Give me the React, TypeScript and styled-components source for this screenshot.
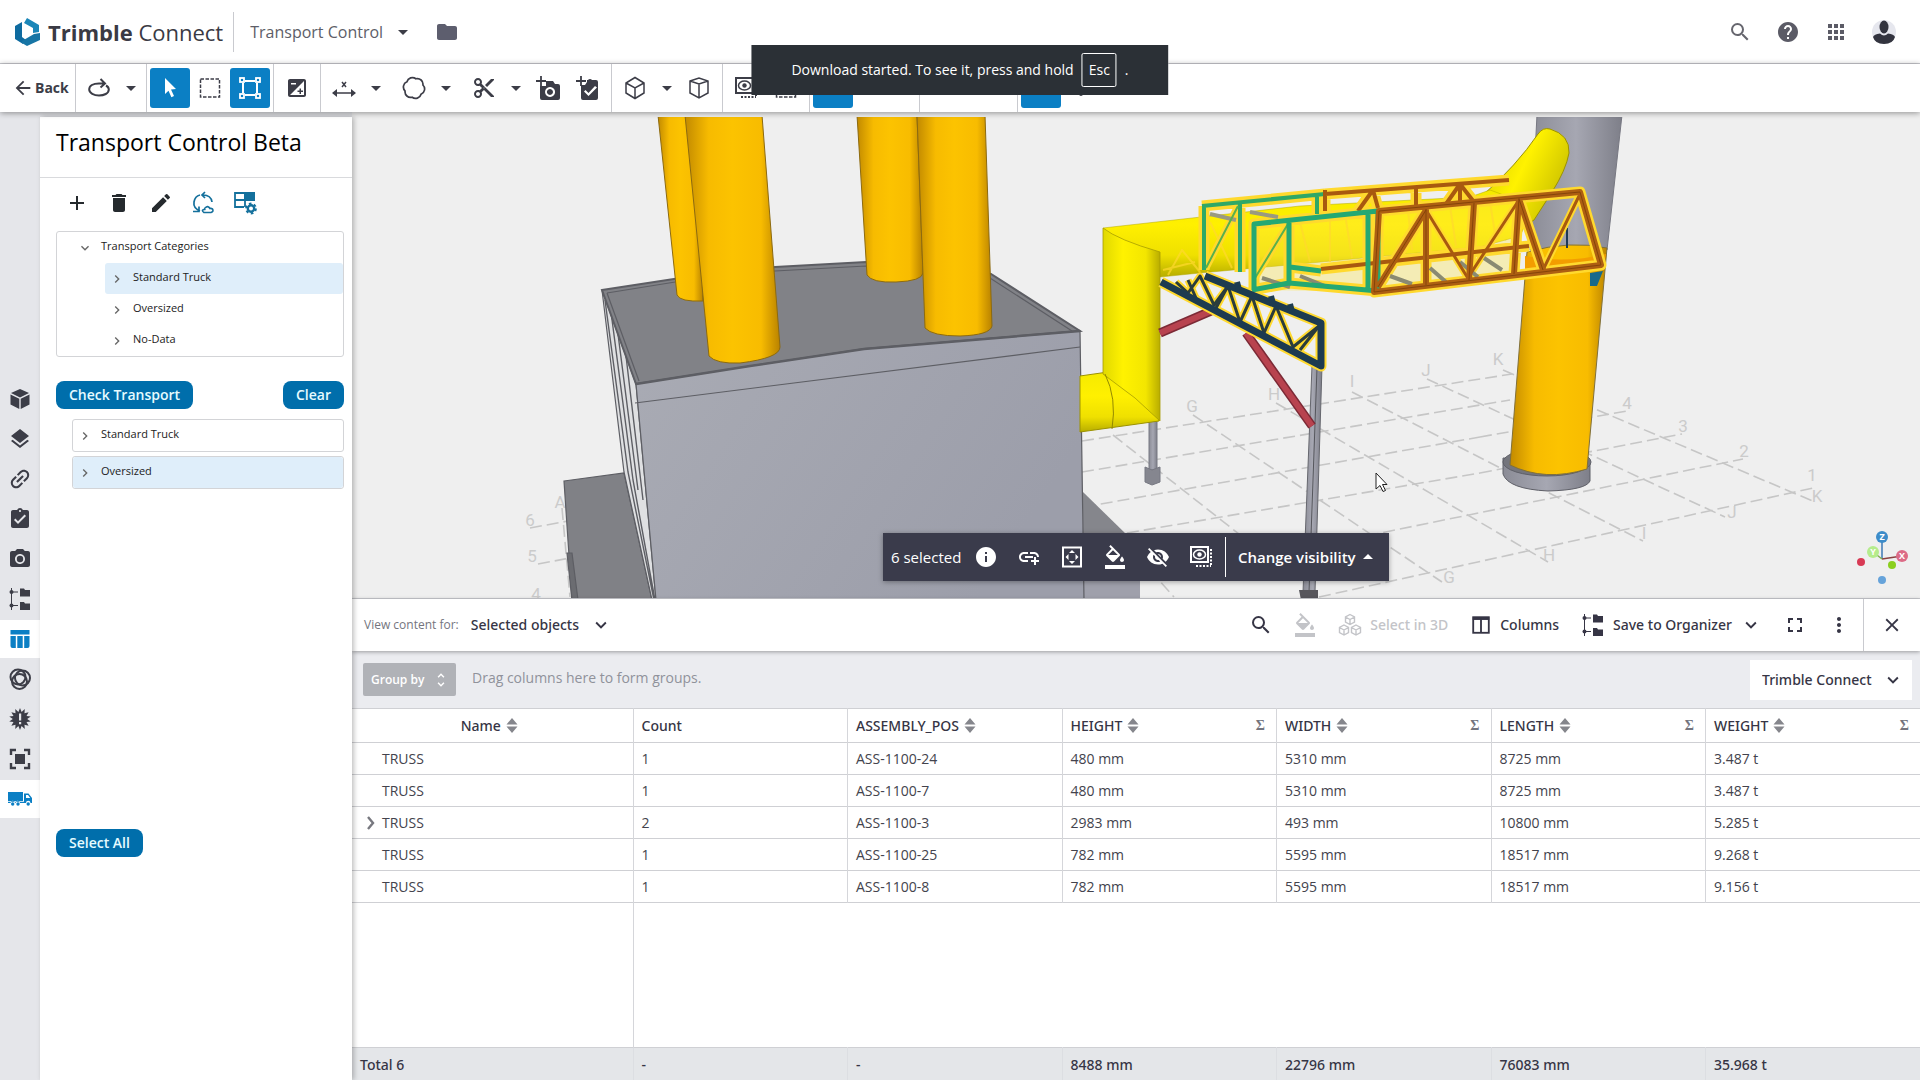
import React from "react";
import styled, { createGlobalStyle, css } from "styled-components";
import {
  MdAdd, MdAddLink, MdApps, MdArrowBack, MdArrowDropDown, MdArrowDropUp, MdAssignmentTurnedIn,
  MdCameraAlt, MdClose, MdContentCut, MdDelete, MdEdit, MdExposure, MdFolder,
  MdFormatColorFill, MdFullscreen, MdHelp, MdInfo, MdKeyboardArrowDown, MdKeyboardArrowRight, MdLayers,
  MdLink, MdMoreVert, MdSearch, MdUnfoldMore, MdVisibilityOff,
} from "react-icons/md";

const color = {
  ink: "#3c3d47",
  text: "#363545",
  line: "#c9cacf",
  soft: "#e5e6ea",
  blue: "#0b7fc4",
  deepBlue: "#006eab",
  pick: "#dfeefa",
  bar: "#3a3b4b",
};

const medium = css`
  font-family: "Noto Sans", "Open Sans", sans-serif;
  font-weight: 500;
`;

const Global = createGlobalStyle`
  *, *::before, *::after { box-sizing: border-box; }
  body { margin: 0; background: #fff; color: ${color.text}; font: 14px/20px "Open Sans", "Noto Sans", sans-serif; }
  button, select { font: inherit; color: inherit; }
  svg { display: block; flex: none; }
`;

const Page = styled.div`
  display: flex;
  flex-direction: column;
  height: 100vh;
  min-height: 720px;
  overflow: hidden;
`;

const plain = css`
  border: 0;
  background: none;
  padding: 0;
  cursor: pointer;
`;

/* ---------- header ---------- */

const Header = styled.header`
  display: flex;
  align-items: center;
  height: 64px;
  flex: none;
  padding: 0 20px 0 14px;
  border-bottom: 1px solid ${color.line};
`;

const Brand = styled.a`
  display: flex;
  align-items: center;
  gap: 6px;
  padding-right: 10px;
  color: #3a3a44;
  font-size: 22px;
  line-height: 40px;
  text-decoration: none;
  border-right: 1px solid ${color.line};
  b { font-weight: 700; }
`;

const ProjectButton = styled.button`
  ${plain}
  display: flex;
  align-items: center;
  gap: 8px;
  padding: 0 16px;
  font-size: 16px;
  color: #5d5e68;
  svg { color: ${color.ink}; }
`;

const HeaderActions = styled.nav`
  display: flex;
  gap: 16px;
  margin-left: auto;
`;

const IconButton = styled.button<{ $size?: number }>`
  ${plain}
  display: inline-flex;
  align-items: center;
  justify-content: center;
  width: ${(p) => p.$size ?? 32}px;
  height: ${(p) => p.$size ?? 32}px;
`;

/* ---------- toolbar ---------- */

const Toolbar = styled.div`
  display: flex;
  flex: none;
  height: 48px;
  position: relative;
  z-index: 3;
  background: #fff;
  color: ${color.ink};
  box-shadow: 0 1px 6px rgba(0, 0, 0, 0.4);
`;

const ToolGroup = styled.div<{ $width?: number; $open?: boolean }>`
  display: flex;
  align-items: center;
  padding: 0 3px;
  min-width: ${(p) => p.$width ?? 0}px;
  border-right: ${(p) => (p.$open ? 0 : 1)}px solid ${color.line};
`;

const BackButton = styled.button`
  ${plain}
  display: flex;
  align-items: center;
  width: 76px;
  gap: 1px;
  padding-left: 12px;
  font-weight: 700;
  border-right: 1px solid ${color.line};
`;

const Tool = styled.button<{ $on?: boolean }>`
  ${plain}
  display: flex;
  align-items: center;
  justify-content: center;
  width: 40px;
  height: 40px;
  border-radius: 3px;
  color: ${(p) => (p.$on ? "#fff" : "inherit")};
  background: ${(p) => (p.$on ? color.blue : "none")};
`;

const Caret = styled.button<{ $gap?: boolean }>`
  ${plain}
  width: 24px;
  height: 40px;
  display: flex;
  align-items: center;
  justify-content: center;
  margin-right: ${(p) => (p.$gap ? 6 : 0)}px;
`;

const Toast = styled.div`
  position: fixed;
  top: 45px;
  left: 50%;
  transform: translateX(-50%);
  z-index: 10;
  display: flex;
  align-items: center;
  gap: 8px;
  height: 50px;
  padding: 0 40px;
  background: #2b3036;
  color: #fff;
  white-space: nowrap;
  kbd {
    font: inherit;
    padding: 6px;
    border: 1px solid #fff;
    border-radius: 2px;
  }
`;

/* ---------- body ---------- */

const Body = styled.div`
  display: flex;
  flex: 1;
  min-height: 0;
  background: ${color.soft};
`;

const Rail = styled.nav`
  display: flex;
  flex-direction: column;
  justify-content: center;
  gap: 2px;
  width: 40px;
  padding-top: 6px;
  color: ${color.ink};
`;

const RailButton = styled.button<{ $on?: boolean }>`
  ${plain}
  display: flex;
  align-items: center;
  justify-content: center;
  height: 38px;
  color: ${(p) => (p.$on ? color.blue : "inherit")};
  background: ${(p) => (p.$on ? "#fff" : "none")};
`;

const Panel = styled.aside`
  display: flex;
  flex-direction: column;
  width: 312px;
  flex: none;
  margin-top: 5px;
  background: #fff;
  box-shadow: 2px 0 5px rgba(0, 0, 0, 0.25);
  z-index: 2;
`;

const PanelTitle = styled.h1`
  margin: 0;
  padding: 9px 16px 19px;
  font-size: 23px;
  line-height: 32px;
  font-weight: 500;
  color: #000;
  border-bottom: 1px solid #d9dadd;
`;

const PanelTools = styled.div`
  display: flex;
  gap: 10px;
  padding: 9px 21px 12px;
  color: #252a2e;
  button:nth-child(n + 4) { color: #14709c; }
`;

const Tree = styled.ul`
  list-style: none;
  margin: 0 8px 0 16px;
  padding: 0;
  border: 1px solid #d3d4d7;
  border-radius: 3px;
  ul { list-style: none; margin: 0; padding: 0 0 0 48px; }
`;

const TreeRow = styled.button<{ $on?: boolean; $root?: boolean }>`
  ${plain}
  display: flex;
  align-items: center;
  gap: 8px;
  width: 100%;
  height: 31px;
  padding: 0 4px 3px ${(p) => (p.$root ? 20 : 4)}px;
  font-size: 11px;
  line-height: 16px;
  color: #222;
  background: ${(p) => (p.$on ? color.pick : "none")};
  border-radius: 3px;
  svg { margin-top: 4px; color: #666; }
`;

const ButtonRow = styled.div`
  display: flex;
  justify-content: space-between;
  padding: 24px 8px 10px 16px;
`;

const Pill = styled.button`
  ${plain}
  height: 28px;
  padding: 0 13px;
  border-radius: 8px;
  background: ${color.deepBlue};
  color: #e6fbff;
  font-weight: 600;
`;

const Results = styled.ul`
  list-style: none;
  display: flex;
  flex-direction: column;
  gap: 4px;
  margin: 0 8px 0 32px;
  padding: 0;
  flex: 0 0 410px;
  li { border: 1px solid #d3d4d7; border-radius: 3px; }
`;

const PanelFoot = styled.div`
  padding: 0 16px;
`;

const Main = styled.main`
  flex: 1;
  min-width: 0;
  display: grid;
  grid-template-rows: minmax(0, 487fr) minmax(0, 481fr);
`;

const Viewer = styled.section`
  position: relative;
  min-height: 0;
  padding-top: 5px;
  background: #efefef;
  border-bottom: 1px solid ${color.line};
`;

const ActionBar = styled.div`
  position: absolute;
  left: 50%;
  bottom: 17px;
  margin-left: -253px;
  width: 506px;
  height: 48px;
  display: flex;
  align-items: center;
  padding-left: 8px;
  background: ${color.bar};
  color: #fff;
  font-size: 15px;
  box-shadow: 0 1px 5px rgba(0, 0, 0, 0.35);
`;

const Count = styled.span`
  width: 73px;
`;

const ActionButtons = styled.div`
  display: flex;
  align-items: center;
  height: 40px;
  padding-right: 3px;
  border-right: 1px solid #fff;
  button { width: 43px; }
`;

const VisibilityButton = styled.button`
  ${plain}
  display: flex;
  align-items: center;
  padding-left: 12px;
  font-weight: 600;
`;

/* ---------- data table ---------- */

const DataPanel = styled.section`
  display: flex;
  flex-direction: column;
  min-height: 0;
  background: #fff;
`;

const DataBar = styled.div`
  display: flex;
  align-items: center;
  height: 52px;
  flex: none;
  padding-left: 12px;
  position: relative;
  z-index: 1;
  background: #fff;
  box-shadow: 0 1px 4px rgba(0, 0, 0, 0.35);
`;

const FieldLabel = styled.label`
  font-size: 12px;
  color: #74757e;
`;

const SelectWrap = styled.span<{ $boxed?: boolean }>`
  display: inline-flex;
  align-items: center;
  height: 40px;
  margin-left: ${(p) => (p.$boxed ? "auto" : "12px")};
  padding: ${(p) => (p.$boxed ? "0 8px 0 12px" : "0")};
  background: #fff;
  svg { margin-left: -24px; pointer-events: none; }
  select {
    ${medium}
    appearance: none;
    border: 0;
    background: none;
    padding: 0 34px 0 0;
    outline: 0;
  }
`;

const DataActions = styled.div`
  display: flex;
  align-items: center;
  margin-left: auto;
  height: 100%;
`;

const DataAction = styled.button<{ $faded?: boolean; $labelled?: boolean }>`
  ${plain}
  ${medium}
  display: flex;
  align-items: center;
  gap: 8px;
  height: 40px;
  padding: 0 ${(p) => (p.$labelled ? 11 : 10)}px;
  color: ${(p) => (p.$faded ? "#c3c4c8" : color.text)};
`;

const CloseCell = styled.div`
  display: flex;
  align-items: center;
  justify-content: center;
  width: 57px;
  height: 100%;
  margin-left: 2px;
  border-left: 1px solid ${color.line};
`;

const GroupBar = styled.div`
  display: flex;
  align-items: center;
  height: 57px;
  flex: none;
  padding: 0 8px 0 11px;
  background: #ebecf0;
`;

const GroupButton = styled.button`
  ${plain}
  display: flex;
  align-items: center;
  justify-content: space-between;
  width: 93px;
  height: 33px;
  padding: 0 6px 0 8px;
  border-radius: 2px;
  background: #b0b2b7;
  color: #fff;
  font-size: 12px;
  font-weight: 600;
`;

const GroupHint = styled.span`
  padding: 0 0 4px 16px;
  color: #90929b;
`;

const TableArea = styled.div`
  flex: 1;
  min-height: 0;
`;

const Table = styled.table`
  width: 100%;
  height: 100%;
  table-layout: fixed;
  border-collapse: collapse;
  th, td {
    height: 32px;
    padding: 0 8px;
    text-align: left;
    font-weight: 400;
    border-top: 1px solid #cfd0d4;
    border-right: 1px solid #d5d6da;
  }
  th:last-child, td:last-child { border-right: 0; }
  thead th { ${medium} height: 34px; }
  tbody td { color: #43434d; }
  tfoot td { ${medium} height: 33px; padding-top: 2px; background: #e4e6e9; border-right-color: #dcdee2; }
`;

const FillerRow = styled.tr`
  td { height: auto; }
  && td + td { border-right: 0; }
`;

const HeadCell = styled.div<{ $center?: boolean }>`
  display: flex;
  align-items: center;
  gap: 5px;
  justify-content: ${(p) => (p.$center ? "center" : "flex-start")};
  padding-right: ${(p) => (p.$center ? 6 : 3)}px;
  svg { color: #85868c; }
`;

const Sigma = styled.span`
  margin-left: auto;
  color: #74757e;
  font: 700 14px/20px "Liberation Serif", serif;
`;

const NameCell = styled.div`
  display: flex;
  align-items: center;
  svg { color: #77787f; }
`;

const ExpandSlot = styled.span`
  width: 22px;
  padding-left: 6px;
`;

/* ---------- icons ---------- */

type IconProps = { size?: number; children?: React.ReactNode };
const Line = ({ size = 24, children }: IconProps) => (
  <svg width={size} height={size} viewBox="0 0 24 24" fill="none" stroke="currentColor" strokeWidth="2">{children}</svg>
);
const Solid = ({ size = 24, children }: IconProps) => (
  <svg width={size} height={size} viewBox="0 0 24 24" fill="currentColor">{children}</svg>
);

const Logo = () => (
  <svg width="28" height="30" viewBox="0 0 28 30">
    <path d="M13 1 25 8v7l-6 1V11l-9-5z" fill="#1b86b8" />
    <path d="M8 5v15l4 3-3 4L1 22V9z" fill="#0e6ba0" />
    <path d="M8 24l12-7 6-1v7l-13 6-5-3z" fill="#1775a5" />
  </svg>
);
const Avatar = () => (
  <svg width="26" height="26" viewBox="0 0 26 26">
    <circle cx="13" cy="13" r="12" fill="#e6e7ee" />
    <ellipse cx="13" cy="8" rx="4.500" ry="6.500" fill="#33343f" />
    <path d="M2 18q1-3 7-3.500 4 4 8 0 6 .5 7 3.500-2 7-11 7T2 18z" fill="#33343f" />
  </svg>
);
const OrbitIcon = () => (
  <Line><path d="M17 7.500H12C6 7.500 2.200 10 2.200 13.500S7 19.500 12 19.500 21.800 17.500 21.800 13.500Q21.800 11 19 9.500M13.500 3l4.500 4.500-4.500 4" /></Line>
);
const PointerIcon = () => <Solid><path d="M7 2l11 11-5 .6 3 6.400-2.600 1.200-2.900-6.500L7 18z" /></Solid>;
const MarqueeIcon = () => <Line><rect x="2.500" y="3" width="19" height="18" strokeWidth="1.500" strokeDasharray="3.500 1.500" /></Line>;
const BoxIcon = () => (
  <Line>
    <path d="M5 7v10M19 7v10M7 5h10M7 19h10" />
    {[[2, 2], [18, 2], [2, 18], [18, 18]].map(([x, y]) => <rect key={x + "-" + y} x={x} y={y} width="4" height="4" strokeWidth="1.800" />)}
  </Line>
);
const MeasureIcon = () => (
  <Line><path d="M1 17h22M10 6l4 5M14 6l-4 5" strokeWidth="1.500" /><path d="M0 17l5-4v8zM24 17l-5-4v8z" fill="currentColor" stroke="none" /></Line>
);
const lobes = Array.from({ length: 7 }, (_, i) => {
  const a = (i * Math.PI) / 3 + 0.2;
  const point = `${(12 + 9.4 * Math.sin(a)).toFixed(2)} ${(12 - 9.4 * Math.cos(a)).toFixed(2)}`;
  return i ? `A5.600 5.600 0 0 1 ${point}` : `M${point}`;
}).join("");
const CloudIcon = () => <Line><path d={lobes + "Z"} strokeWidth="1.700" /></Line>;
const CubeLine = ({ corner = false }: { corner?: boolean }) => (
  <Line><path d={corner ? "M3 5l9-3 9 3v12l-9 5-9-5zM3 5l9 3 9-3M12 8v14" : "M12 1.500l9 5.500v10l-9 5.500L3 17V7zM3 7l9 5 9-5M12 12v10"} strokeWidth="1.500" /></Line>
);
const PlusMark = () => <path d="M0 5h10M5 0v10" stroke="currentColor" strokeWidth="1.800" fill="none" />;
const CameraPlus = () => (
  <Solid><PlusMark /><path fillRule="evenodd" d="M10 7V5h7l2 3h3q2 0 2 2v12q0 2-2 2H6q-2 0-2-2V10h6zm4 4a5 5 0 1 0 .1 0zm0 2a3 3 0 1 1-.1 0z" /></Solid>
);
const TodoPlus = () => (
  <Solid><PlusMark /><path fillRule="evenodd" d="M11 6V4h1a2.500 2.500 0 0 1 4 0h4q2 0 2 2v16q0 2-2 2H7q-2 0-2-2V9h4zm8 4l-6.500 7-3-3L8 15.500l4.500 4.500L21 11.500z" /></Solid>
);
const EyeBox = () => (
  <Line><rect x="2" y="2" width="17" height="15" /><ellipse cx="10.500" cy="9.500" rx="6" ry="4.500" strokeWidth="1.500" /><circle cx="10.500" cy="9.500" r="2.200" fill="currentColor" stroke="none" /><path d="M22 4v17M7 21h15" strokeDasharray="2 1.500" /></Line>
);
const CubeSolid = () => (
  <Solid><path d="M12 2l9 4-9 4.500L3 6z" /><path d="M2.500 7.500l8.800 4.300V22l-8.800-4.500zM21.500 7.500l-8.800 4.300V22l8.800-4.500z" /></Solid>
);
const OrganizerIcon = () => (
  <Solid>
    <path d="M3 1h1v22H3zM4 4.500h6v1H4zM4 18h6v1H4z" />
    <circle cx="3.500" cy="5" r="2" /><circle cx="3.500" cy="18.500" r="2" />
    <path d="M12 1.500h4l1 1.500h5v6.500H12zM12 15h4l1 1.500h5V23H12z" />
  </Solid>
);
const TableIcon = () => <Solid><path d="M2.500 3h19v4.500h-19zM2.500 9h5.300v12H4.500q-2 0-2-2zM9.300 9h5.400v12H9.300zM16.200 9h5.300v10q0 2-2 2h-3.300z" /></Solid>;
const KnotIcon = () => (
  <Line>
    <circle cx="10" cy="10" r="7.500" strokeWidth="2" /><circle cx="14.500" cy="11" r="7.500" strokeWidth="2" /><circle cx="11.500" cy="14.500" r="7.500" strokeWidth="2" />
  </Line>
);
const burst = Array.from({ length: 28 }, (_, i) => {
  const a = (i * Math.PI) / 14;
  const r = i % 2 ? 7.2 : 11;
  return `${12 + r * Math.sin(a)},${12 - r * Math.cos(a)}`;
}).join(" ");
const ClashIcon = () => <Solid><polygon points={burst} /><path d="M11 6.500h2.200v7H11zM11 15h2.200v2.300H11z" fill="#e5e6ea" /></Solid>;
const FocusIcon = () => (
  <Solid><rect x="7" y="7" width="10" height="10" /><path d="M3 8V3h5M16 3h5v5M21 16v5h-5M8 21H3v-5" fill="none" stroke="currentColor" strokeWidth="2.400" /></Solid>
);
const TruckIcon = () => (
  <Solid><path d="M0 5h15v9H0zM16 6.500h4.500L24 11v5h-1.500a2.200 2.200 0 0 0-4.500 0h-6a2.200 2.200 0 0 0-4.400 0H7a2.200 2.200 0 0 0-4.500 0H0v-1.300h16zM18 8v3h4.200L20 8z" fillRule="evenodd" /><circle cx="4.700" cy="17" r="1.700" /><circle cx="10" cy="17" r="1.700" /><circle cx="20.200" cy="17" r="1.700" /></Solid>
);
const SyncIcon = () => (
  <Line><path d="M9 20Q2 17 3 11t6-7M2 20.500h6v-5M14 1l-3 3 3 3M12 4q8 0 9 7" strokeWidth="1.700" /><path d="M13 21.500h7q3-1 1.500-3.500-1.500-1-2.500-.5-2-3.500-5-.5-1 1-.5 1.500-4 .5-.5 3z" strokeWidth="1.600" /></Line>
);
const TableGear = () => (
  <Line><path d="M11 16H2V2h19v8M2 9h19M12 2v14" strokeWidth="1.800" /><path d="M12 2h9v7h-9z" fill="currentColor" /><circle cx="18" cy="17.500" r="3.200" strokeWidth="2.400" /><circle cx="18" cy="17.500" r="4.900" strokeWidth="2" strokeDasharray="2.600 2.500" /></Line>
);
const FitIcon = () => (
  <Solid><rect x="3" y="2.500" width="18" height="19" fill="none" stroke="currentColor" strokeWidth="2" /><path d="M12 5l3 3H9zM12 19l3-3H9zM5.500 12l3-3v6zM18.500 12l-3-3v6z" /></Solid>
);
const CubesIcon = () => (
  <Line><path d="M12 1.500l4.500 2.500v5L12 11.500 7.500 9V4zM7.500 4L12 6.500 16.500 4M12 6.500v5M6 12l4.500 2.500v5L6 22l-4.500-2.500v-5zM1.500 14.500L6 17l4.500-2.500M6 17v5M18 12l4.500 2.500v5L18 22l-4.500-2.500v-5zM13.500 14.500L18 17l4.500-2.500M18 17v5" strokeWidth="1.400" /></Line>
);
const ColumnsIcon = () => <Line size={22}><rect x="3.500" y="3.500" width="17" height="17" /><path d="M3 5h18" strokeWidth="3" /><path d="M12 4v16" /></Line>;
const SortIcon = () => <svg width="12" height="15" viewBox="0 0 12 15" fill="currentColor"><path d="M6 0l5.500 6.500H.5zM6 15l5.500-6.500H.5z" /></svg>;
const ExpandIcon = () => <svg width="10" height="16" viewBox="0 0 10 16" fill="none" stroke="currentColor" strokeWidth="2.400"><path d="M2 2l5 6-5 6" /></svg>;

/* ---------- 3D scene ---------- */

const gridLines = [
  [1319, 597, 1813, 488], [1150, 580, 1743, 459], [1127, 533, 1480, 473], [1480, 473, 1682, 434], [1084, 507, 1480, 437], [1480, 437, 1627, 411],
  [1082, 472, 1510, 400], [1082, 441, 1512, 374],
  [1503, 370, 1815, 502], [1427, 379, 1725, 517], [1352, 392, 1643, 541], [1276, 403, 1548, 562],
  [1193, 415, 1442, 582], [1113, 435, 1300, 582], [1150, 570, 1174, 597],
  [530, 528, 568, 521], [538, 564, 570, 558], [562, 508, 570, 597],
];
const gridLabels: [string, number, number][] = [
  ["G", 1192, 412], ["H", 1274, 400], ["I", 1352, 387], ["J", 1426, 376], ["K", 1498, 365], ["4", 1627, 409],
  ["3", 1683, 432], ["2", 1744, 457], ["1", 1812, 481], ["K", 1817, 502], ["J", 1732, 518], ["I", 1644, 539],
  ["H", 1549, 561], ["G", 1449, 583], ["A", 560, 508], ["6", 530, 526], ["5", 532, 562], ["4", 536, 600],
];

const backGreen = "M1202 206L1325 194M1204 206V222M1240 203V272M1204 222V270M1317 196V214";
const backBrown = "M1325 194L1509 180M1325 190V211M1373 190L1378 208M1373 190L1358 211M1416 187V206M1460 182V204M1460 184L1446 204M1460 184L1474 202M1321 269L1529 246";
const frontGreen = "M1254 290V224L1378 211V291L1289 283L1252 290M1289 221V283M1368 212V288M1290 267L1321 271";
const frontBrown = "M1379 211L1580 192L1601 265L1374 292ZM1426 209V285M1474 203L1469 280M1519 198L1514 274M1378 287L1426 210M1519 199L1543 270";
const thinBrown = "M1426 210L1469 280M1469 276L1519 200M1543 270L1579 196";
const thinGreen = "M1255 278L1288 224M1206 268L1238 206";
const navyChords = "M1205 276L1321 323V366L1161 282";
const navyWeb = "M1176 282L1188 293L1200 276L1214 305L1228 286L1240 322L1252 296L1264 333L1276 306L1293 347L1319 326L1300 350M1188 280L1196 298M1228 286L1216 308";

const Scene = () => (
  <svg width="100%" height="100%" viewBox="352 117 1568 481" preserveAspectRatio="xMidYMin slice" role="img" aria-label="3D model of the plant">
    <defs>
      <linearGradient id="amber"><stop offset="0" stopColor="#c28a00" /><stop offset=".25" stopColor="#f7bb00" /><stop offset=".5" stopColor="#fcc300" /><stop offset=".8" stopColor="#f8bc00" /><stop offset="1" stopColor="#b98200" /></linearGradient>
      <linearGradient id="pipeV"><stop offset="0" stopColor="#e0d800" /><stop offset=".35" stopColor="#fff200" /><stop offset=".75" stopColor="#f3e600" /><stop offset="1" stopColor="#b9ad00" /></linearGradient>
      <linearGradient id="pipeH" x2="0" y2="1"><stop offset="0" stopColor="#f5ea00" /><stop offset=".4" stopColor="#fff000" /><stop offset=".75" stopColor="#efe000" /><stop offset="1" stopColor="#b7ad00" /></linearGradient>
      <linearGradient id="pipeD" x2="1" y2=".6"><stop offset="0" stopColor="#cfc500" /><stop offset=".5" stopColor="#fff200" /><stop offset="1" stopColor="#c4ba00" /></linearGradient>
      <linearGradient id="steel"><stop offset="0" stopColor="#8b8c96" /><stop offset=".5" stopColor="#a6a7b2" /><stop offset="1" stopColor="#7e7f89" /></linearGradient>
      <linearGradient id="wall" x2="1" y2=".4"><stop offset="0" stopColor="#a9abb4" /><stop offset="1" stopColor="#9c9eaa" /></linearGradient>
    </defs>
    <g stroke="#c6c6c6" strokeWidth="1.600" strokeDasharray="12 5">
      {gridLines.map(([a, b, c, d], i) => <line key={i} x1={a} y1={b} x2={c} y2={d} />)}
    </g>
    <g fill="#cbcbcb" fontFamily="Roboto, sans-serif" fontSize="17" textAnchor="middle">
      {gridLabels.map(([t, x, y], i) => <text key={i} x={x} y={y}>{t}</text>)}
    </g>

    <g stroke="#5d5e64" strokeWidth="1.200">
      <path d="M564 481L624 473L652 600H572Z" fill="#808186" />
      <path d="M567 553h5l6 47h-6z" fill="#6b6c71" />
      <path d="M1083 492L1127 535L1140 552V600H1083Z" fill="#85868c" stroke="none" />
      <path d="M1083 575L1140 572V600H1083Z" fill="#9fa0ab" stroke="none" />
      <path d="M602 290L636 384L656 600H652L624 472Z" fill="#dfe0e2" />
      <path d="M605 300L628 472L654 600M611 312L633 480L655 600M618 334L638 490M626 356L643 500" fill="none" strokeWidth="1.400" />
      <path d="M602 290L700 275L775 267L866 262L991 274L1080 331L864 349L636 384Z" fill="#818287" strokeWidth="2" />
      <path d="M607 293L700 278L775 271L866 266L990 278L1072 331M607 293L639 381" fill="none" />
      <path d="M636 384L750 366L864 349L1080 331L1084 600H656Z" fill="url(#wall)" />
      <path d="M636 384L750 366L864 349L1080 331" fill="none" strokeWidth="2.500" />
      <path d="M635 403L1080 347" fill="none" />
    </g>
    <g stroke="#8c6a10" strokeWidth="1">
      <path d="M658 115L677 295Q680 302 703 301L700 115Z" fill="url(#amber)" />
      <path d="M685 115L709 356Q716 364 740 363Q780 358 780 347L762 115Z" fill="url(#amber)" />
      <path d="M857 115L867 275Q872 283 896 282Q922 281 923 273L917 115Z" fill="url(#amber)" />
      <path d="M917 115L925 328Q932 336 960 336Q990 335 992 326L985 115Z" fill="url(#amber)" />
    </g>

    <path d="M1537 115H1622L1607 250H1530Z" fill="url(#steel)" stroke="#777882" />
    <path d="M1503 458V474Q1508 489 1548 491Q1586 490 1590 481V463Z" fill="url(#steel)" stroke="#5f6068" />
    <ellipse cx="1547" cy="462" rx="44" ry="14" fill="#74757c" stroke="#5f6068" />
    <path d="M1527 252Q1570 240 1607 248L1587 469Q1545 482 1510 465Z" fill="url(#amber)" stroke="#80703a" />
    <path d="M1525 256Q1565 264 1606 254L1604 266L1525 277Z" fill="#f39d00" />
    <path d="M1567 228V248" stroke="#1e3a55" strokeWidth="2" />
    <path d="M1590 273L1603 271L1597 286L1590 286Z" fill="#17698c" />

    <g stroke="#777882"><path d="M1149 418H1157V470H1149Z" fill="url(#steel)" /><path d="M1145 467L1152 470L1160 467V482L1152 485L1145 482Z" fill="#85868f" /></g>
    <path d="M1482 196Q1517 165 1538 134Q1543 127 1550 129Q1570 135 1569 153Q1566 170 1552 192L1534 220L1505 240Z" fill="url(#pipeD)" stroke="#9c9200" />
    <path d="M1103 228L1201 217L1300 206L1470 197L1490 190Q1538 205 1520 236L1480 247L1321 262L1200 273L1160 277Z" fill="url(#pipeH)" stroke="#b3a900" strokeWidth=".5" />
    <path d="M1080 376L1108 372L1159 400V421L1080 432Z" fill="url(#pipeH)" stroke="#9c9200" />
    <path d="M1103 228Q1118 240 1160 252V421L1135 398L1103 374Z" fill="url(#pipeV)" stroke="#a79d00" strokeWidth=".8" />
    <path d="M1105 374Q1117 398 1112 429" fill="none" stroke="#938900" />

    <path d="M1312 366H1322L1315 592H1303Z" fill="url(#steel)" stroke="#66676e" />
    <path d="M1317 368L1309 592" stroke="#55565c" />
    <path d="M1299 590H1318V600H1301Z" fill="#57565c" />
    <g stroke="#7c2a36" strokeWidth="9"><path d="M1160 333L1211 311M1246 333L1312 426" /></g>
    <g stroke="#b8434f" strokeWidth="6"><path d="M1160 333L1211 311M1246 333L1312 426" /></g>

    <g fill="none" strokeLinejoin="round">
      <path d="M1254 224L1378 211L1380 292L1252 290ZM1380 211L1519 199L1514 274L1380 290Z" fill="#ffe94a" fillOpacity=".35" />
      <g stroke="#ffd92e">
        <path d={backGreen + backBrown + frontGreen + frontBrown + navyChords} strokeWidth="11" />
        <path d={thinBrown + thinGreen + navyWeb} strokeWidth="7" />
        <path d="M1163 270L1195 262M1168 275L1182 250L1200 272M1210 222L1232 268M1300 222L1310 262M1330 218V262M1345 214L1352 258M1408 210L1412 250M1450 206L1456 246M1490 202L1496 240" strokeWidth="2" strokeOpacity=".7" />
      </g>
      <path d="M1262 278L1290 287M1300 276L1325 286M1390 276L1412 284M1430 268L1446 282M1460 262L1478 277M1484 258L1502 270" stroke="#8a8a72" strokeWidth="4" />
      <path d="M1250 212L1278 217M1210 214L1236 220" stroke="#9a9a80" strokeWidth="4" />
      <path d={backGreen} stroke="#2fa866" strokeWidth="4" />
      <path d={backBrown} stroke="#a8590f" strokeWidth="4" />
      <path d={thinBrown} stroke="#a8590f" strokeWidth="3" />
      <path d={thinGreen} stroke="#58b04c" strokeWidth="2" />
      <path d={frontGreen} stroke="#24a873" strokeWidth="5" />
      <path d={frontBrown} stroke="#ad5f12" strokeWidth="6" />
      <path d={frontBrown} stroke="#85440a" strokeWidth="1" />
      <path d={navyWeb} stroke="#2a3c3c" strokeWidth="3" />
      <path d={navyChords} stroke="#1d3b50" strokeWidth="7" />
      <path d="M1239 290l-2-8M1273 304l-2-8M1292 312l-2-8" stroke="#1d3b50" strokeWidth="6" />
    </g>

    <path d="M1376 473V489L1380 485.500L1383 491.500L1385.500 490.500L1382.500 484.500H1387Z" fill="#fff" stroke="#222" />

    <g strokeWidth="1.500">
      <path d="M1882 538V559" stroke="#3c78b4" /><path d="M1882 559L1902 556" stroke="#8c4040" /><path d="M1882 559L1873 552" stroke="#80b050" />
      <circle cx="1882" cy="537" r="6" fill="#3d8cc9" /><circle cx="1902" cy="556" r="6" fill="#dc6b86" /><circle cx="1873" cy="552" r="6" fill="#b5ec8c" />
      <circle cx="1861" cy="562" r="4" fill="#d83a54" /><circle cx="1892" cy="565" r="4" fill="#8bcf1e" /><circle cx="1882" cy="580" r="4" fill="#66a3da" />
    </g>
    <g fill="#fff" fontFamily="Open Sans, sans-serif" fontSize="9" fontWeight="700" textAnchor="middle">
      <text x="1882" y="540">Z</text><text x="1902" y="559">X</text><text x="1873" y="555">Y</text>
    </g>
  </svg>
);

/* ---------- data ---------- */

const rows = [
  ["TRUSS", "1", "ASS-1100-24", "480 mm", "5310 mm", "8725 mm", "3.487 t"],
  ["TRUSS", "1", "ASS-1100-7", "480 mm", "5310 mm", "8725 mm", "3.487 t"],
  ["TRUSS", "2", "ASS-1100-3", "2983 mm", "493 mm", "10800 mm", "5.285 t"],
  ["TRUSS", "1", "ASS-1100-25", "782 mm", "5595 mm", "18517 mm", "9.268 t"],
  ["TRUSS", "1", "ASS-1100-8", "782 mm", "5595 mm", "18517 mm", "9.156 t"],
];
const totals = ["Total 6", "-", "-", "8488 mm", "22796 mm", "76083 mm", "35.968 t"];

const LinkGlyph = styled(MdLink)`
  transform: rotate(-45deg);
`;

const railItems: [string, React.ReactNode, boolean?][] = [
  ["Models", <CubeSolid />], ["Layers", <MdLayers size={24} />], ["Links", <LinkGlyph size={26} />],
  ["To-dos", <MdAssignmentTurnedIn size={24} />], ["Views", <MdCameraAlt size={24} />], ["Organizer", <OrganizerIcon />],
  ["Data table", <TableIcon />, true], ["Status", <KnotIcon />], ["Clashes", <ClashIcon />], ["Focus", <FocusIcon />],
  ["Transport", <TruckIcon />, true],
];

const NameCol = styled.col`
  width: 281px;
`;

const App = () => (
  <Page>
    <Global />
    <Header>
      <Brand href="#home"><Logo /><span><b>Trimble</b> Connect</span></Brand>
      <ProjectButton>Transport Control<MdArrowDropDown size={24} /></ProjectButton>
      <IconButton aria-label="Files"><MdFolder size={24} color="#5d5e6e" /></IconButton>
      <HeaderActions>
        <IconButton aria-label="Search"><MdSearch size={24} color="#66666e" /></IconButton>
        <IconButton aria-label="Help"><MdHelp size={24} color="#5b5b66" /></IconButton>
        <IconButton aria-label="Apps"><MdApps size={24} color="#5b5b66" /></IconButton>
        <IconButton aria-label="Account"><Avatar /></IconButton>
      </HeaderActions>
    </Header>

    <Toolbar>
      <BackButton><MdArrowBack size={22} />Back</BackButton>
      <ToolGroup>
        <Tool aria-label="Orbit"><OrbitIcon /></Tool><Caret aria-label="Orbit options"><MdArrowDropDown size={24} /></Caret>
      </ToolGroup>
      <ToolGroup>
        <Tool $on aria-label="Select"><PointerIcon /></Tool>
        <Tool aria-label="Area select"><MarqueeIcon /></Tool>
        <Tool $on aria-label="Object box"><BoxIcon /></Tool>
      </ToolGroup>
      <ToolGroup><Tool aria-label="Contrast"><MdExposure size={24} /></Tool></ToolGroup>
      <ToolGroup>
        <Tool aria-label="Measure"><MeasureIcon /></Tool><Caret $gap aria-label="Measure options"><MdArrowDropDown size={24} /></Caret>
        <Tool aria-label="Markup"><CloudIcon /></Tool><Caret $gap aria-label="Markup options"><MdArrowDropDown size={24} /></Caret>
        <Tool aria-label="Clip"><MdContentCut size={24} /></Tool><Caret aria-label="Clip options"><MdArrowDropDown size={24} /></Caret>
        <Tool aria-label="Add view"><CameraPlus /></Tool>
        <Tool aria-label="Add to-do"><TodoPlus /></Tool>
      </ToolGroup>
      <ToolGroup>
        <Tool aria-label="Projection"><CubeLine /></Tool><Caret aria-label="Projection options"><MdArrowDropDown size={24} /></Caret>
        <Tool aria-label="Home view"><CubeLine corner /></Tool>
      </ToolGroup>
      <ToolGroup>
        <Tool aria-label="Show only"><EyeBox /></Tool><Tool aria-label="Ghost"><MarqueeIcon /></Tool>
      </ToolGroup>
      <ToolGroup $width={110}><Tool $on aria-label="Properties" /></ToolGroup>
      <ToolGroup $width={98} />
      <ToolGroup $open>
        <Tool $on aria-label="Assistant" /><Tool aria-label="More"><MdMoreVert size={24} /></Tool>
      </ToolGroup>
    </Toolbar>
    <Toast role="status">Download started. To see it, press and hold<kbd>Esc</kbd>.</Toast>

    <Body>
      <Rail>
        {railItems.map(([label, icon, on]) => <RailButton key={label} aria-label={label} $on={on}>{icon}</RailButton>)}
      </Rail>

      <Panel>
        <PanelTitle>Transport Control Beta</PanelTitle>
        <PanelTools>
          <IconButton aria-label="Add"><MdAdd size={24} /></IconButton>
          <IconButton aria-label="Delete"><MdDelete size={24} /></IconButton>
          <IconButton aria-label="Edit"><MdEdit size={24} /></IconButton>
          <IconButton aria-label="Sync"><SyncIcon /></IconButton>
          <IconButton aria-label="Table settings"><TableGear /></IconButton>
        </PanelTools>
        <Tree>
          <li>
            <TreeRow $root><MdKeyboardArrowDown size={16} />Transport Categories</TreeRow>
            <ul>
              <li><TreeRow $on><MdKeyboardArrowRight size={16} />Standard Truck</TreeRow></li>
              <li><TreeRow><MdKeyboardArrowRight size={16} />Oversized</TreeRow></li>
              <li><TreeRow><MdKeyboardArrowRight size={16} />No-Data</TreeRow></li>
            </ul>
          </li>
        </Tree>
        <ButtonRow><Pill>Check Transport</Pill><Pill>Clear</Pill></ButtonRow>
        <Results>
          <li><TreeRow><MdKeyboardArrowRight size={16} />Standard Truck</TreeRow></li>
          <li><TreeRow $on><MdKeyboardArrowRight size={16} />Oversized</TreeRow></li>
        </Results>
        <PanelFoot><Pill>Select All</Pill></PanelFoot>
      </Panel>

      <Main>
        <Viewer>
          <Scene />
          <ActionBar>
            <Count>6 selected</Count>
            <ActionButtons>
              <IconButton aria-label="Info"><MdInfo size={24} /></IconButton>
              <IconButton aria-label="Add link"><MdAddLink size={24} /></IconButton>
              <IconButton aria-label="Fit"><FitIcon /></IconButton>
              <IconButton aria-label="Colour"><MdFormatColorFill size={24} /></IconButton>
              <IconButton aria-label="Hide"><MdVisibilityOff size={24} /></IconButton>
              <IconButton aria-label="Isolate"><EyeBox /></IconButton>
            </ActionButtons>
            <VisibilityButton>Change visibility<MdArrowDropUp size={24} /></VisibilityButton>
          </ActionBar>
        </Viewer>

        <DataPanel>
          <DataBar>
            <FieldLabel htmlFor="scope">View content for:</FieldLabel>
            <SelectWrap>
              <select id="scope"><option>Selected objects</option></select>
              <MdKeyboardArrowDown size={22} />
            </SelectWrap>
            <DataActions>
              <DataAction aria-label="Search"><MdSearch size={24} /></DataAction>
              <DataAction $faded aria-label="Colour"><MdFormatColorFill size={24} /></DataAction>
              <DataAction $faded $labelled><CubesIcon />Select in 3D</DataAction>
              <DataAction $labelled><ColumnsIcon />Columns</DataAction>
              <DataAction $labelled><OrganizerIcon />Save to Organizer<MdKeyboardArrowDown size={22} /></DataAction>
              <DataAction aria-label="Full screen"><MdFullscreen size={24} /></DataAction>
              <DataAction aria-label="More"><MdMoreVert size={24} /></DataAction>
              <CloseCell><IconButton aria-label="Close"><MdClose size={22} /></IconButton></CloseCell>
            </DataActions>
          </DataBar>
          <GroupBar>
            <GroupButton>Group by<MdUnfoldMore size={18} /></GroupButton>
            <GroupHint>Drag columns here to form groups.</GroupHint>
            <SelectWrap $boxed>
              <select aria-label="Preset"><option>Trimble Connect</option></select>
              <MdKeyboardArrowDown size={22} />
            </SelectWrap>
          </GroupBar>
          <TableArea>
            <Table>
              <colgroup><NameCol /></colgroup>
              <thead>
                <tr>
                  <th><HeadCell $center>Name<SortIcon /></HeadCell></th>
                  <th>Count</th>
                  <th><HeadCell>ASSEMBLY_POS<SortIcon /></HeadCell></th>
                  {["HEIGHT", "WIDTH", "LENGTH", "WEIGHT"].map((h) => (
                    <th key={h}><HeadCell>{h}<SortIcon /><Sigma>Σ</Sigma></HeadCell></th>
                  ))}
                </tr>
              </thead>
              <tbody>
                {rows.map((row, i) => (
                  <tr key={row[2]}>
                    {row.map((cell, j) => (
                      <td key={j}>
                        {j === 0 ? <NameCell><ExpandSlot>{i === 2 && <ExpandIcon />}</ExpandSlot>{cell}</NameCell> : cell}
                      </td>
                    ))}
                  </tr>
                ))}
                <FillerRow>{totals.map((_, j) => <td key={j} />)}</FillerRow>
              </tbody>
              <tfoot><tr>{totals.map((t, j) => <td key={j}>{t}</td>)}</tr></tfoot>
            </Table>
          </TableArea>
        </DataPanel>
      </Main>
    </Body>
  </Page>
);

export default App;
